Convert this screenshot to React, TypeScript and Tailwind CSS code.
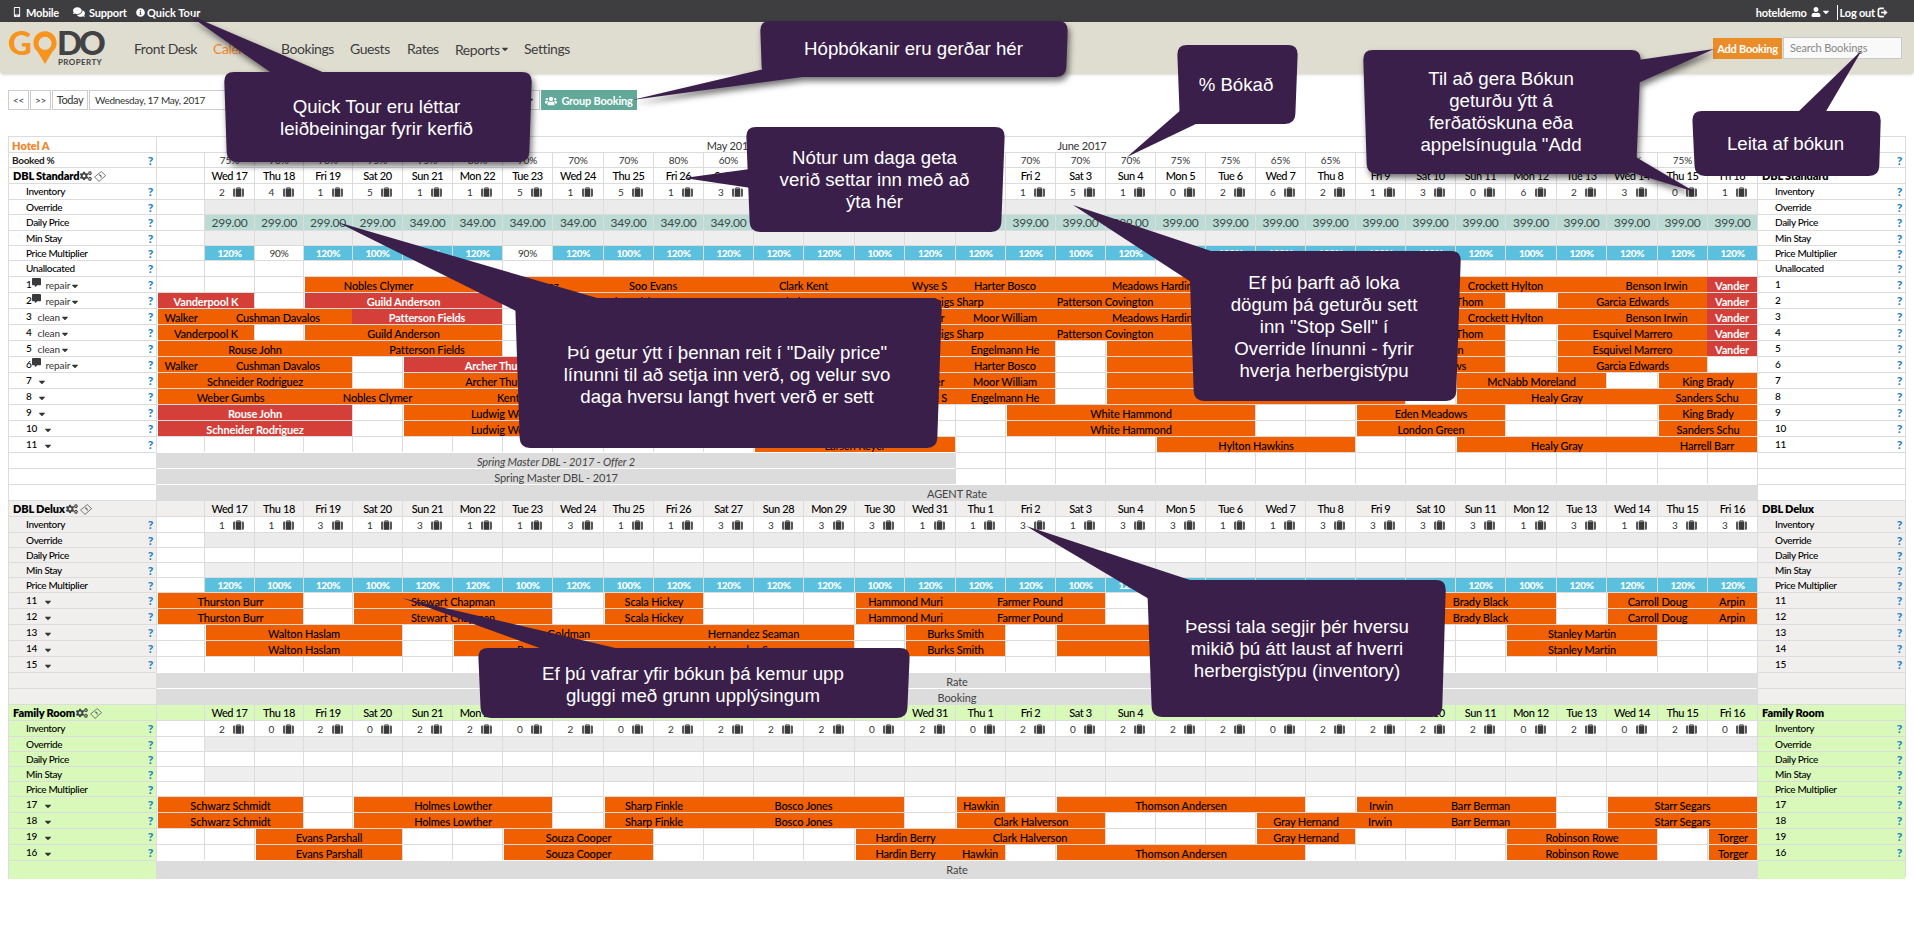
import React from 'react';
import {
  FaCaretDown,
  FaCogs,
  FaCommentAlt,
  FaComments,
  FaInfoCircle,
  FaMobileAlt,
  FaUser,
  FaUsers,
} from 'react-icons/fa';

type Tone = 'orange' | 'red';
type Booking = { start: number; span: number; name: string; tone?: Tone; joined?: boolean };
type Room = { no: string; status?: string; note?: boolean; bookings: Booking[] };
type Offer = { name: string; span: number; italic?: boolean };
type RoomType = {
  name: string;
  bg: string;
  inventory: string;
  price?: boolean;
  multiplier?: boolean;
  unallocated?: boolean;
  rooms: Room[];
  offers: Offer[];
};

const COLS =
  'grid-cols-[148px_48px_50px_49px_49px_50px_50px_50px_50px_51px_50px_50px_50px_50px_51px_50px_51px_50px_50px_50px_50px_50px_50px_50px_50px_50px_50px_50px_51px_50px_51px_50px_50px_148px]';

const WEEK = ['Wed', 'Thu', 'Fri', 'Sat', 'Sun', 'Mon', 'Tue'];
const DAYS = Array.from({ length: 31 }, (_, i) => `${WEEK[i % 7]} ${i < 15 ? 17 + i : i - 14}`);
const BOOKED = [75, 70, 70, 75, 75, 80, 70, 70, 70, 80, 60, 65, 70, 70, 75, 70, 70, 70, 70, 75, 75, 65, 65, 70, 70, 75, 70, 75, 70, 75, 70];
const MULT = [120, 90, 120, 100, 120, 120, 90, 120, 100, 120, 120, 120, 120, 100, 120, 120, 120, 100, 120, 120, 100, 120, 120, 120, 120, 120, 100, 120, 120, 120, 120];
const MULT_DELUX = MULT.map((m) => (m === 90 ? 100 : m));

// Bookings are placed by day column: 0 is the lead-in column, 1 is Wed 17.
const b = (start: number, span: number, name: string, tone: Tone = 'orange', joined = false): Booking => ({
  start,
  span,
  name,
  tone,
  joined,
});
const j = (start: number, span: number, name: string, tone: Tone = 'orange') => b(start, span, name, tone, true);

const TYPES: RoomType[] = [
  {
    name: 'DBL Standard',
    bg: 'bg-white',
    inventory: '2415115151323111151026213062301',
    price: true,
    multiplier: true,
    unallocated: true,
    rooms: [
      { no: '1', status: 'repair', note: true, bookings: [b(3, 3, 'Nobles Clymer'), j(6, 3, 'Perez Gomez'), j(9, 2, 'Soo Evans'), j(11, 4, 'Clark Kent'), j(15, 1, 'Wyse S'), j(16, 2, 'Harter Bosco'), j(18, 4, 'Meadows Harding'), j(22, 3, ''), j(25, 4, 'Crockett Hylton'), j(29, 2, 'Benson Irwin'), j(31, 1, 'Vander', 'red')] },
      { no: '2', status: 'repair', note: true, bookings: [b(0, 2, 'Vanderpool K', 'red'), b(3, 4, 'Guild Anderson', 'red'), b(8, 3, 'Luis Walsh'), j(11, 4, 'Clark Kent'), j(15, 2, 'Meigs Sharp'), j(17, 4, 'Patterson Covington'), j(21, 4, ''), j(25, 2, 'Lucas Thom'), b(28, 3, 'Garcia Edwards'), j(31, 1, 'Vander', 'red')] },
      { no: '3', status: 'clean', bookings: [b(0, 1, 'Walker'), j(1, 3, 'Cushman Davalos'), j(4, 3, 'Patterson Fields', 'red'), b(8, 7, ''), j(15, 1, 'Porter'), j(16, 2, 'Moor William'), j(18, 4, 'Meadows Harding'), j(22, 3, ''), j(25, 4, 'Crockett Hylton'), j(29, 2, 'Benson Irwin'), j(31, 1, 'Vander', 'red')] },
      { no: '4', status: 'clean', bookings: [b(0, 2, 'Vanderpool K'), b(3, 4, 'Guild Anderson'), b(8, 7, ''), j(15, 2, 'Meigs Sharp'), j(17, 4, 'Patterson Covington'), j(21, 4, ''), j(25, 2, 'Lucas Thom'), b(28, 3, 'Esquivel Marrero'), j(31, 1, 'Vander', 'red')] },
      { no: '5', status: 'clean', bookings: [b(0, 4, 'Rouse John'), j(4, 3, 'Patterson Fields'), b(8, 8, ''), j(16, 2, 'Engelmann He'), b(19, 5, ''), j(24, 3, 'London Green'), b(28, 3, 'Esquivel Marrero'), j(31, 1, 'Vander', 'red')] },
      { no: '6', status: 'repair', note: true, bookings: [b(0, 1, 'Walker'), j(1, 3, 'Cushman Davalos'), b(5, 4, 'Archer Thurston', 'red'), j(9, 7, ''), j(16, 2, 'Harter Bosco'), b(19, 5, ''), j(24, 3, 'Eden Meadows'), b(28, 3, 'Garcia Edwards')] },
      { no: '7', bookings: [b(0, 4, 'Schneider Rodriguez'), b(5, 4, 'Archer Thurston'), j(9, 6, ''), j(15, 1, 'Porter'), j(16, 2, 'Moor William'), b(19, 6, ''), b(26, 3, 'McNabb Moreland'), b(30, 2, 'King Brady')] },
      { no: '8', bookings: [b(0, 3, 'Weber Gumbs'), j(3, 3, 'Nobles Clymer'), j(6, 3, 'Kent Lawson'), j(9, 6, ''), j(15, 1, 'Wyse S'), j(16, 2, 'Engelmann He'), b(19, 6, ''), b(26, 4, 'Healy Gray'), j(30, 2, 'Sanders Schu')] },
      { no: '9', bookings: [b(0, 4, 'Rouse John', 'red'), b(5, 4, 'Ludwig Wolfe'), b(17, 5, 'White Hammond'), b(24, 3, 'Eden Meadows'), b(30, 2, 'King Brady')] },
      { no: '10', bookings: [b(0, 4, 'Schneider Rodriguez', 'red'), b(5, 4, 'Ludwig Wolfe'), b(17, 5, 'White Hammond'), b(24, 3, 'London Green'), b(30, 2, 'Sanders Schu')] },
      { no: '11', bookings: [b(12, 4, 'Larsen Keyer'), b(20, 4, 'Hylton Hawkins'), b(26, 4, 'Healy Gray'), j(30, 2, 'Harrell Barr')] },
    ],
    offers: [
      { name: 'Spring Master DBL - 2017 - Offer 2', span: 16, italic: true },
      { name: 'Spring Master DBL - 2017', span: 16 },
      { name: 'AGENT Rate', span: 32 },
    ],
  },
  {
    name: 'DBL Delux',
    bg: 'bg-[#f0efed]',
    inventory: '1131311311333311313311333313133',
    multiplier: true,
    rooms: [
      ...['11', '12'].map((no) => ({ no, bookings: [b(0, 3, 'Thurston Burr'), b(4, 4, 'Stewart Chapman'), b(9, 2, 'Scala Hickey'), b(14, 2, 'Hammond Muri'), j(16, 3, 'Farmer Pound'), b(22, 3, ''), j(25, 3, 'Brady Black'), b(29, 2, 'Carroll Doug'), j(31, 1, 'Arpin')] })),
      ...['13', '14'].map((no) => ({ no, bookings: [b(1, 4, 'Walton Haslam'), b(6, 4, 'Reyes Goldman'), j(10, 4, 'Hernandez Seaman'), b(15, 2, 'Burks Smith'), b(18, 4, ''), b(27, 3, 'Stanley Martin')] })),
      { no: '15', bookings: [] },
    ],
    offers: [
      { name: 'Rate', span: 32 },
      { name: 'Booking', span: 32 },
    ],
  },
  {
    name: 'Family Room',
    bg: 'bg-[#d9f9bb]',
    inventory: '2020220202222020202220222202020',
    rooms: [
      { no: '17', bookings: [b(0, 3, 'Schwarz Schmidt'), b(4, 4, 'Holmes Lowther'), b(9, 2, 'Sharp Finkle'), j(11, 4, 'Bosco Jones'), b(16, 1, 'Hawkin'), b(18, 5, 'Thomson Andersen'), b(24, 1, 'Irwin'), j(25, 3, 'Barr Berman'), b(29, 3, 'Starr Segars')] },
      { no: '18', bookings: [b(0, 3, 'Schwarz Schmidt'), b(4, 4, 'Holmes Lowther'), b(9, 2, 'Sharp Finkle'), j(11, 4, 'Bosco Jones'), b(16, 3, 'Clark Halverson'), b(22, 2, 'Gray Hernand'), j(24, 1, 'Irwin'), j(25, 3, 'Barr Berman'), b(29, 3, 'Starr Segars')] },
      { no: '19', bookings: [b(2, 3, 'Evans Parshall'), b(7, 3, 'Souza Cooper'), b(14, 2, 'Hardin Berry'), j(16, 3, 'Clark Halverson'), b(22, 2, 'Gray Hernand'), b(27, 3, 'Robinson Rowe'), b(31, 1, 'Torger')] },
      { no: '16', bookings: [b(2, 3, 'Evans Parshall'), b(7, 3, 'Souza Cooper'), b(14, 2, 'Hardin Berry'), j(16, 1, 'Hawkin'), b(18, 5, 'Thomson Andersen'), b(27, 3, 'Robinson Rowe'), b(31, 1, 'Torger')] },
    ],
    offers: [{ name: 'Rate', span: 32 }],
  },
];

const CELL = 'border-l border-t border-[#dcdcdc] flex items-center justify-center overflow-hidden whitespace-nowrap';

function Row({ h, children }: { h: 15 | 16; children: React.ReactNode }) {
  return <div className={`grid ${COLS} ${h === 16 ? 'h-4' : 'h-[15px]'} border-r border-[#dcdcdc]`}>{children}</div>;
}

function Suitcase() {
  return (
    <svg className="h-[10px] w-[11px]" viewBox="0 0 11 10">
      <path d="M3.8 2V.8h3.400V2" fill="none" stroke="#555" strokeWidth="1" />
      <rect x="2.700" y="1.600" width="5.600" height="8.200" fill="#3a3a3c" />
      <path d="M2 1.600v8.200H1.200Q0 9.800 0 8.600V2.800Q0 1.600 1.200 1.600zM9 1.600v8.200h.8Q11 9.800 11 8.600V2.800Q11 1.600 9.800 1.600z" fill="#5a5858" />
    </svg>
  );
}

function Label({ bg, text, help = true, children }: { bg: string; text?: string; help?: boolean; children?: React.ReactNode }) {
  return (
    <div className={`flex items-center justify-between overflow-hidden whitespace-nowrap border-l border-t border-[#dcdcdc] pl-[17px] pr-[3px] text-[10px] font-medium tracking-[-0.35px] text-black ${bg}`}>
      <div className="flex items-center">{text ?? children}</div>
      {help && <span className="pt-px text-[12px] font-black leading-none text-[#1b82c5]">?</span>}
    </div>
  );
}

function Title({ bg, name, icons }: { bg: string; name: string; icons?: boolean }) {
  return (
    <div className={`flex items-center overflow-hidden whitespace-nowrap border-l border-t border-[#dcdcdc] pl-1 pt-px text-[11px] font-extrabold tracking-[-0.15px] text-black ${bg}`}>
      {name}
      {icons && (
        <>
          <FaCogs className="ml-px size-3 text-[#444]" />
          <svg className="ml-0.5 h-[11px] w-3" viewBox="0 0 12 11" fill="none" stroke="#666" strokeWidth="0.9">
            <path d="M.6 6 7.200.6 11.600 4.600 5 10.400z" />
            <path d="M4.900 4.200q2.200-.6 2.400 2.400" strokeWidth="1.100" />
          </svg>
        </>
      )}
    </div>
  );
}

function DataRow({ h, label, bg, cell, cellClass }: { h: 15 | 16; label: string; bg: string; cell?: (i: number) => React.ReactNode; cellClass: (i: number) => string }) {
  return (
    <Row h={h}>
      <Label bg={bg} text={label} />
      <div className={CELL} />
      {DAYS.map((d, i) => (
        <div key={d} className={`${CELL} ${cellClass(i)}`}>
          {cell?.(i)}
        </div>
      ))}
      <Label bg={bg} text={label} />
    </Row>
  );
}

function RoomRow({ room, bg }: { room: Room; bg: string }) {
  const cells: React.ReactNode[] = [];
  let col = 0;
  const fillTo = (end: number) => {
    for (; col < end; col++) cells.push(<div key={`e${col}`} className={CELL} />);
  };
  for (const k of room.bookings) {
    fillTo(k.start);
    const tone = k.tone === 'red' ? 'bg-[#d43f3a] font-bold text-white' : 'bg-[#f06000] font-medium text-black';
    cells.push(
      <div
        key={k.start}
        className={`min-w-0 border-t border-[#dcdcdc] ${k.joined ? '' : 'border-l pl-px'}`}
        style={{ gridColumn: `span ${k.span}` }}
      >
        <div className={`flex h-full items-center justify-center overflow-hidden whitespace-nowrap pt-px text-[11px] leading-none tracking-[-0.15px] ${tone}`}>{k.name}</div>
      </div>,
    );
    col = k.start + k.span;
  }
  fillTo(32);
  return (
    <Row h={16}>
      <Label bg={bg}>
        <span>{room.no}</span>
        {room.note && <FaCommentAlt className="mb-1 ml-px h-[9px] w-[9px] text-[#3a3a3c]" />}
        <span className={`pt-0.5 tracking-[-0.1px] text-[#444] ${room.note ? 'ml-1' : 'ml-1.5'}`}>{room.status}</span>
        <FaCaretDown className="mt-0.5 size-2.5 text-[#333]" />
      </Label>
      {cells}
      <Label bg={bg} text={room.no} />
    </Row>
  );
}

function TypeBlock({ t, first }: { t: RoomType; first: boolean }) {
  const mult = first ? MULT : MULT_DELUX;
  return (
    <>
      <Row h={16}>
        <Title bg={t.bg} name={t.name} icons />
        <div className={`${CELL} ${t.bg}`} />
        {DAYS.map((d) => (
          <div key={d} className={`${CELL} ${t.bg} pt-px text-[11px] font-medium tracking-[-0.4px] text-black`}>
            {d}
          </div>
        ))}
        <Title bg={t.bg} name={t.name} />
      </Row>
      <DataRow
        h={16}
        label="Inventory"
        bg={t.bg}
        cellClass={() => 'bg-white gap-2 pl-1 text-[10px] text-[#333]'}
        cell={(i) => (
          <>
            <span className="w-1.5 pt-0.5 text-center">{t.inventory[i]}</span>
            <Suitcase />
          </>
        )}
      />
      <DataRow h={15} label="Override" bg={t.bg} cellClass={() => 'bg-[#ebebeb]'} />
      <DataRow
        h={t.price ? 16 : 15}
        label="Daily Price"
        bg={t.bg}
        cellClass={() => (t.price ? 'bg-[#bbdbd4] pt-px text-[12px] tracking-[-0.3px] text-[#3c4a48]' : 'bg-white')}
        cell={(i) => (t.price ? (i < 4 ? '299.00' : i < 16 ? '349.00' : '399.00') : null)}
      />
      <DataRow h={15} label="Min Stay" bg={t.bg} cellClass={() => 'bg-[#eeeeee]'} />
      <DataRow
        h={15}
        label="Price Multiplier"
        bg={t.bg}
        cellClass={(i) =>
          t.multiplier && mult[i] !== 90
            ? 'bg-[#5bc0de] text-[10px] font-black tracking-[-0.4px] text-white'
            : 'bg-white text-[10px] tracking-[-0.2px] text-[#333]'
        }
        cell={(i) => (t.multiplier ? `${mult[i]}%` : null)}
      />
      {t.unallocated && <DataRow h={16} label="Unallocated" bg={t.bg} cellClass={() => 'bg-white'} />}
      {t.rooms.map((r) => (
        <RoomRow key={r.no} room={r} bg={t.bg} />
      ))}
      {t.offers.map((o) => (
        <Row key={o.name} h={16}>
          <Label bg={t.bg} help={false} text="" />
          <div
            className={`flex items-center justify-center border-l border-t border-l-[#dcdcdc] border-t-white bg-[#dcdcdc] pt-px text-[11px] tracking-[-0.1px] text-[#444] ${o.italic ? 'italic' : ''}`}
            style={{ gridColumn: `span ${o.span}` }}
          >
            {o.name}
          </div>
          {Array.from({ length: 32 - o.span }, (_, i) => (
            <div key={i} className={CELL} />
          ))}
          <Label bg={t.bg} help={false} text="" />
        </Row>
      ))}
    </>
  );
}

type Point = [number, number];
type Bubble = { corners: [Point, Point, Point, Point]; tails: string[]; shadow?: boolean };

const BUBBLES: Bubble[] = [
  { corners: [[224, 72], [532, 72], [529, 162], [227, 162]], tails: ['187,14 327,74 273,74'], shadow: true },
  { corners: [[760, 21], [1068, 21], [1066, 77], [762, 77]], tails: ['632,100 764,69 810,76'], shadow: true },
  { corners: [[746, 127], [1005, 127], [1001, 232], [750, 232]], tails: ['684,178 750,169 751,188'] },
  { corners: [[1177, 45], [1298, 45], [1295, 124], [1180, 124]], tails: ['1127,157 1182,109 1200,122'] },
  { corners: [[1363, 50], [1641, 50], [1636, 174], [1367, 174]], tails: ['1714,49 1638,60 1636,84', '1695,192 1634,156 1630,172'], shadow: true },
  { corners: [[1692, 111], [1881, 111], [1879, 176], [1695, 176]], tails: ['1862,50 1797,113 1825,113'] },
  { corners: [[515, 298], [942, 298], [937, 448], [520, 448]], tails: ['337,222 604,300 540,330 516,311'] },
  { corners: [[1189, 251], [1461, 251], [1456, 401], [1194, 401]], tails: ['1073,205 1217,253 1210,290 1191,282'] },
  { corners: [[1147, 580], [1446, 580], [1442, 717], [1152, 717]], tails: ['1026,526 1196,582 1180,610 1149,599'] },
  { corners: [[478, 648], [910, 648], [907, 718], [481, 718]], tails: ['402,598 624,650 545,650'] },
];

function roundedPath(c: Point[], r: number) {
  const toward = (p: Point, q: Point) => {
    const d = Math.hypot(q[0] - p[0], q[1] - p[1]);
    return `${p[0] + ((q[0] - p[0]) * r) / d} ${p[1] + ((q[1] - p[1]) * r) / d}`;
  };
  return (
    c
      .map((p, i) => {
        const prev = c[(i + 3) % 4];
        const next = c[(i + 1) % 4];
        return `${i ? 'L' : 'M'}${toward(p, prev)} Q${p[0]} ${p[1]} ${toward(p, next)}`;
      })
      .join(' ') + 'Z'
  );
}

function Callouts() {
  const text = 'absolute flex items-center justify-center text-center whitespace-pre pt-px';
  return (
    <div className="absolute inset-0 font-['Liberation_Sans',Arial,sans-serif] text-[18.67px] leading-[22px] text-white">
      <svg className="absolute inset-0" width="1914" height="948" viewBox="0 0 1914 948" fill="#3a1f4b">
        {BUBBLES.map((s, i) => (
          <g key={i} className={s.shadow ? 'drop-shadow-[2px_4px_3px_rgba(0,0,0,0.55)]' : ''}>
            {s.tails.map((t) => (
              <polygon key={t} points={t} />
            ))}
            <path d={roundedPath(s.corners, 10)} />
          </g>
        ))}
      </svg>
      <div className={`${text} left-[223px] top-[72px] h-[90px] w-[307px]`}>{'Quick Tour eru léttar\nleiðbeiningar fyrir kerfið'}</div>
      <div className={`${text} left-[760px] top-[20px] h-[56px] w-[307px]`}>Hópbókanir eru gerðar hér</div>
      <div className={`${text} left-[746px] top-[127px] h-[105px] w-[257px]`}>{'Nótur um daga geta\nverið settar inn með að\nýta hér'}</div>
      <div className={`${text} left-[1176px] top-[45px] h-[79px] w-[120px]`}>% Bókað</div>
      <div className={`${text} left-[1363px] top-[49px] h-[124px] w-[276px]`}>{'Til að gera Bókun\ngeturðu ýtt á\nferðatöskuna eða\nappelsínugula "Add'}</div>
      <div className={`${text} left-[1691px] top-[111px] h-[65px] w-[189px]`}>Leita af bókun</div>
      <div className={`${text} left-[515px] top-[299px] h-[150px] w-[424px]`}>{'Þú getur ýtt í þennan reit í "Daily price"\nlínunni til að setja inn verð, og velur svo\ndaga hversu langt hvert verð er sett'}</div>
      <div className={`${text} left-[1189px] top-[251px] h-[150px] w-[270px]`}>{'Ef þú þarft að loka\ndögum þá geturðu sett\ninn "Stop Sell" í\nOverride línunni - fyrir\nhverja herbergistýpu'}</div>
      <div className={`${text} left-[1148px] top-[580px] h-[137px] w-[298px]`}>{'Þessi tala segjir þér hversu\nmikið þú átt laust af hverri\nherbergistýpu (inventory)'}</div>
      <div className={`${text} left-[478px] top-[649px] h-[70px] w-[430px]`}>{'Ef þú vafrar yfir bókun þá kemur upp\ngluggi með grunn upplýsingum'}</div>
    </div>
  );
}

function TopBar() {
  return (
    <div className="flex h-[22px] items-center justify-between bg-[#3e3e40] pl-3 pr-[26px] pt-0.5 text-[11px] font-bold leading-none tracking-[-0.2px] text-white">
      <div className="flex items-center">
        <FaMobileAlt className="size-2.5" />
        <span className="ml-1 w-[47px]">Mobile</span>
        <FaComments className="size-3" />
        <span className="ml-1 w-[47px]">Support</span>
        <FaInfoCircle className="size-[9px]" />
        <span className="ml-0.5 tracking-normal">Quick Tour</span>
      </div>
      <div className="flex items-center">
        <span>hoteldemo</span>
        <FaUser className="ml-1 size-2.5" />
        <FaCaretDown className="size-2.5" />
        <span className="ml-1.5 flex h-[15px] items-center border-l border-white pl-0.5">Log out</span>
        <svg className="ml-0.5 size-[11px]" viewBox="0 0 12 12" fill="none" stroke="white" strokeWidth="1.8">
          <path d="M7.5 1.5h-4q-2 0-2 2v5q0 2 2 2h4" />
          <path d="M4.5 6h4" />
          <path d="M8 3.2 11.2 6 8 8.8z" fill="white" strokeWidth="0.6" />
        </svg>
      </div>
    </div>
  );
}

function Logo() {
  return (
    <div className="relative h-[52px] w-[96px] font-['Lato',sans-serif] font-black">
      <svg className="absolute left-[33px] top-[9px]" width="24" height="34" viewBox="0 0 24 34">
        <path fillRule="evenodd" fill="#f7941e" d="M12 .2C5.300.2.4 5.300.4 12c0 3.800 1.600 6.400 4.200 8.800L12 33l7.400-12.200c2.600-2.400 4.200-5 4.200-8.800C23.600 5.300 18.700.2 12 .2zm0 5.600a6.500 6.500 0 1 1 0 13 6.500 6.500 0 0 1 0-13z" />
      </svg>
      <span className="absolute left-2 top-1 text-[33px] leading-[32px] text-[#f7941e]">G</span>
      <span className="absolute left-[57px] top-1 text-[33px] leading-[32px] tracking-[-3px] text-[#424244]">DO</span>
      <span className="absolute left-[58px] top-[35px] text-[8px] font-bold leading-[10px] tracking-[0.4px] text-[#424244]">PROPERTY</span>
    </div>
  );
}

function NavBar() {
  return (
    <div className="relative flex h-[52px] items-center rounded-b-[4px] bg-[#dfddd0] shadow-[0_1px_3px_rgba(0,0,0,0.15)]">
      <Logo />
      <nav className="ml-[38px] flex items-center text-[14px] tracking-[-0.45px] text-[#3d3d3f]">
        <a className="w-[79px]">Front Desk</a>
        <a className="w-[68px] text-[#f0862b]">Calendar</a>
        <a className="w-[69px]">Bookings</a>
        <a className="w-[57px]">Guests</a>
        <a className="w-[48px]">Rates</a>
        <a className="flex w-[69px] items-center pt-0.5">
          Reports
          <FaCaretDown className="size-2.5" />
        </a>
        <a>Settings</a>
      </nav>
      <div className="ml-auto mr-3 flex items-end">
        <button className="h-[21px] w-[69px] bg-[#ea8c27] pt-0.5 text-[11px] font-bold tracking-[-0.25px] text-white">Add Booking</button>
        <div className="ml-px flex h-[22px] w-[119px] items-center border border-[#c9c9c9] bg-[#f9f9f9] pl-1.5 pt-px text-[11px] tracking-[-0.15px] text-[#888]">Search Bookings</div>
      </div>
    </div>
  );
}

function Toolbar() {
  const box = 'flex h-5 items-center border border-[#ccc] bg-white';
  return (
    <div className="mt-4 flex gap-px pl-2 text-[11px] tracking-[-0.4px] text-[#333]">
      <div className={`${box} w-[21px] justify-center text-[10px]`}>&lt;&lt;</div>
      <div className={`${box} w-[21px] justify-center text-[10px]`}>&gt;&gt;</div>
      <div className={`${box} w-[36px] justify-center`}>Today</div>
      <div className={`${box} w-[211px] pl-[5px] text-[10px] tracking-[-0.3px]`}>Wednesday, 17 May, 2017</div>
      <div className={`${box} w-[239px] justify-end pr-1`}>
        <FaCaretDown className="size-2.5" />
      </div>
      <button className="flex h-5 w-[96px] items-center justify-center gap-1 bg-[#62a99a] pt-0.5 text-[11px] font-bold tracking-[-0.2px] text-white">
        <FaUsers className="size-3" />
        Group Booking
      </button>
    </div>
  );
}

function HeaderRows() {
  return (
    <>
      <Row h={16}>
        <div className="flex items-center border-l border-t border-[#dcdcdc] pl-[3px] pt-px text-[11px] font-extrabold text-[#f0862b]">Hotel A</div>
        <div className="col-span-7 border-l border-t border-[#dcdcdc]" />
        <div className="col-span-9 flex items-center justify-center border-t border-[#dcdcdc] pl-1 pt-px text-[11px] tracking-[-0.2px] text-[#333]">May 2017</div>
        <div className="col-span-5 flex items-center justify-center border-t border-[#dcdcdc] pl-1 pt-px text-[11px] tracking-[-0.2px] text-[#333]">June 2017</div>
        <div className="col-span-11 border-t border-[#dcdcdc]" />
        <div className="border-t border-[#dcdcdc]" />
      </Row>
      <Row h={15}>
        <div className="flex items-center justify-between border-l border-t border-[#dcdcdc] pl-[3px] pr-[3px] text-[10px] font-bold tracking-[-0.3px] text-[#222]">
          Booked %<span className="pt-px text-[12px] font-black leading-none text-[#1b82c5]">?</span>
        </div>
        <div className={CELL} />
        {BOOKED.map((p, i) => (
          <div key={i} className={`${CELL} text-[10px] text-[#333]`}>
            {p}%
          </div>
        ))}
        <Label bg="bg-white" text="" />
      </Row>
    </>
  );
}

export default function App() {
  return (
    <div className="relative h-[948px] w-[1914px] overflow-hidden bg-white font-['Lato','Open_Sans',sans-serif]">
      <TopBar />
      <NavBar />
      <Toolbar />
      <div className="ml-2 mt-[26px] w-[1898px] border-b border-[#dcdcdc]">
        <HeaderRows />
        {TYPES.map((t, i) => (
          <TypeBlock key={t.name} t={t} first={i === 0} />
        ))}
      </div>
      <Callouts />
    </div>
  );
}
